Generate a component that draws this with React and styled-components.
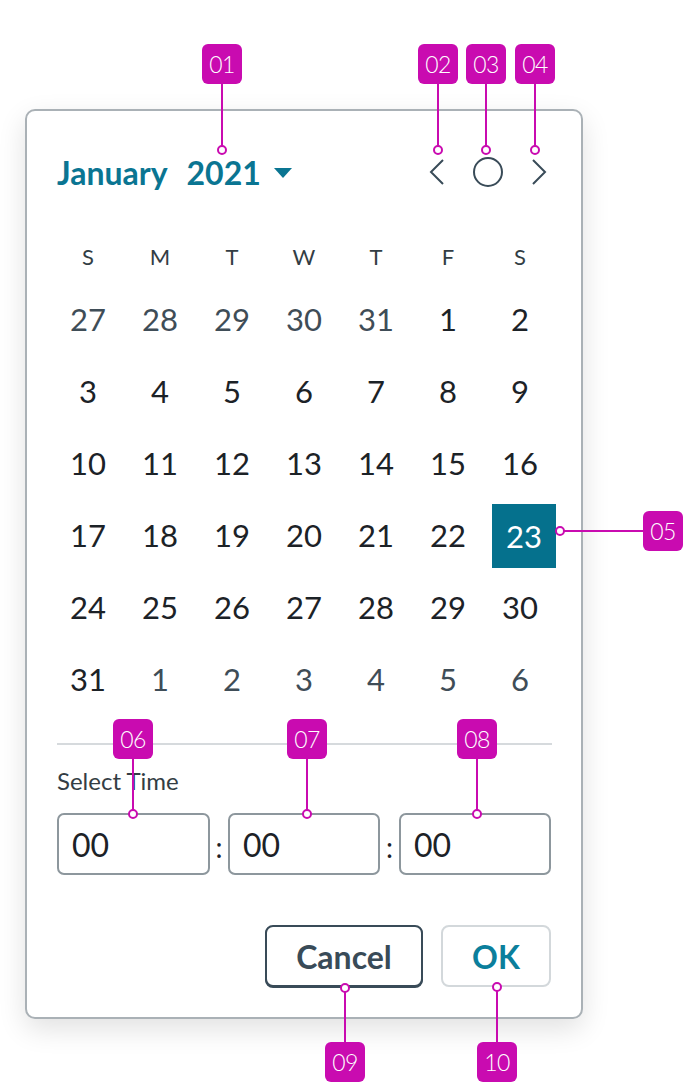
import React from "react"
import styled, { createGlobalStyle } from "styled-components"

const GlobalStyle = createGlobalStyle`
  html, body {
    margin: 0;
    padding: 0;
    background: #ffffff;
  }
  body {
    font-family: "Lato", "Liberation Sans", sans-serif;
  }
`

const MAGENTA = "#c90bb0"
const TEAL = "#0a7592"

const Page = styled.div`
  position: relative;
  width: 684px;
  height: 1082px;
  overflow: hidden;
  padding: 109px 0 0 25px;
  box-sizing: border-box;
`

const Card = styled.div`
  width: 558px;
  height: 910px;
  box-sizing: border-box;
  border: 2px solid #aab1b6;
  border-radius: 10px;
  background: #fff;
  box-shadow: 0 10px 28px rgba(0, 0, 0, 0.12);
  display: flex;
  flex-direction: column;
  padding-bottom: 30px;
`

const Header = styled.header`
  margin-top: 40px;
  height: 42px;
  display: flex;
  align-items: center;
  justify-content: space-between;
  padding: 0 34px 0 30px;
`

const Title = styled.div`
  display: flex;
  align-items: center;
  gap: 19px;
  color: ${TEAL};
  font-size: 32px;
  font-weight: 700;
`

const YearPicker = styled.div`
  display: flex;
  align-items: center;
  gap: 13px;
`

const Caret = styled.span`
  width: 0;
  height: 0;
  border-left: 9px solid transparent;
  border-right: 9px solid transparent;
  border-top: 10px solid ${TEAL};
  margin-top: 2px;
`

const Nav = styled.div`
  display: flex;
  align-items: center;
  gap: 27px;
`

const NavButton = styled.button`
  border: none;
  background: none;
  padding: 0;
  width: ${(p) => p.$w || 16}px;
  height: 30px;
  display: flex;
  align-items: center;
  justify-content: center;
  color: #394b58;
`

const Grid = styled.div`
  display: grid;
  grid-template-columns: repeat(7, 72px);
  margin: 36px 0 0 25px;
`

const WeekDay = styled.div`
  height: 54px;
  display: flex;
  align-items: center;
  justify-content: center;
  font-size: 22px;
  color: #333d44;
`

const Day = styled.div`
  height: 72px;
  display: flex;
  align-items: center;
  justify-content: center;
  font-size: 31px;
  color: ${(p) => (p.$muted ? "#3f4d57" : "#1c2227")};
`

const Selected = styled.div`
  height: 72px;
  display: flex;
  align-items: center;
  justify-content: flex-end;
  span {
    width: 64px;
    height: 64px;
    margin-top: 2px;
    background: #05718d;
    color: #fff;
    font-size: 31px;
    display: flex;
    align-items: center;
    justify-content: center;
  }
`

const Divider = styled.hr`
  margin: 28px 29px 0 30px;
  border: none;
  height: 2px;
  background: #d6dadd;
`

const Label = styled.div`
  margin: 24px 0 0 30px;
  font-size: 24px;
  line-height: 24px;
  color: #333d44;
`

const TimeRow = styled.div`
  margin: 20px 0 0 30px;
  display: flex;
  align-items: center;
`

const TimeBox = styled.div`
  width: ${(p) => p.$w}px;
  height: 62px;
  box-sizing: border-box;
  border: 2px solid #8d979d;
  border-radius: 7px;
  padding-left: 13px;
  display: flex;
  align-items: center;
  font-size: 32px;
  color: #1c2227;
`

const Colon = styled.span`
  width: ${(p) => p.$w}px;
  text-align: center;
  font-size: 28px;
  color: #1c2227;
  margin-top: 6px;
`

const Actions = styled.div`
  margin: 50px 30px 0 0;
  display: flex;
  justify-content: flex-end;
  gap: 18px;
`

const Button = styled.button`
  height: 62px;
  width: ${(p) => p.$w}px;
  box-sizing: border-box;
  border-radius: 8px;
  background: #fff;
  font-family: "Lato", sans-serif;
  font-weight: 700;
  font-size: 32px;
  border: 2px solid ${(p) => (p.$primary ? "#d3d8db" : "#394b58")};
  color: ${(p) => (p.$primary ? "#0b7f9c" : "#394b58")};
  box-shadow: ${(p) => (p.$primary ? "none" : "0 1px 0 #394b58")};
`

const Badge = styled.div`
  position: absolute;
  left: ${(p) => p.$x - 20}px;
  top: ${(p) => p.$y - 20}px;
  width: 40px;
  height: 40px;
  border-radius: 6px;
  background: ${MAGENTA};
  color: #fff;
  font-family: "Lato", sans-serif;
  font-weight: 300;
  font-size: 23px;
  display: flex;
  align-items: center;
  justify-content: center;
  letter-spacing: -0.5px;
`

const Leader = styled.div`
  position: absolute;
  background: ${MAGENTA};
`

const Dot = styled.div`
  position: absolute;
  left: ${(p) => p.$x - 5}px;
  top: ${(p) => p.$y - 5}px;
  width: 10px;
  height: 10px;
  box-sizing: border-box;
  border-radius: 50%;
  border: 2px solid ${MAGENTA};
  background: #fff;
`

function Marker({ label, bx, by, dx, dy }) {
  const vertical = bx === dx
  const lineStyle = vertical
    ? { left: bx - 1, top: Math.min(by, dy), width: 2, height: Math.abs(dy - by) }
    : { left: Math.min(bx, dx), top: by - 1, width: Math.abs(bx - dx), height: 2 }
  return (
    <>
      <Leader style={lineStyle} />
      <Dot $x={dx} $y={dy} />
      <Badge $x={bx} $y={by}>{label}</Badge>
    </>
  )
}

const markers = [
  { label: "01", bx: 222, by: 64, dx: 222, dy: 150 },
  { label: "02", bx: 438, by: 64, dx: 438, dy: 150 },
  { label: "03", bx: 486, by: 64, dx: 486, dy: 150 },
  { label: "04", bx: 535, by: 64, dx: 535, dy: 150 },
  { label: "05", bx: 663, by: 531, dx: 560, dy: 531 },
  { label: "06", bx: 133, by: 739, dx: 133, dy: 814 },
  { label: "07", bx: 307, by: 739, dx: 307, dy: 814 },
  { label: "08", bx: 477, by: 739, dx: 477, dy: 814 },
  { label: "09", bx: 345, by: 1062, dx: 345, dy: 988 },
  { label: "10", bx: 497, by: 1062, dx: 497, dy: 987 },
]

const weekDays = ["S", "M", "T", "W", "T", "F", "S"]

const days = [
  ...[27, 28, 29, 30, 31].map((d) => ({ d, muted: true })),
  ...Array.from({ length: 31 }, (_, i) => ({ d: i + 1 })),
  ...[1, 2, 3, 4, 5, 6].map((d) => ({ d, muted: true })),
]

export default function App() {
  return (
    <>
      <GlobalStyle />
      <Page>
        <Card>
          <Header>
            <Title>
              <span>January</span>
              <YearPicker>
                <span>2021</span>
                <Caret />
              </YearPicker>
            </Title>
            <Nav>
              <NavButton aria-label="Previous month">
                <svg width="16" height="28" viewBox="0 0 16 28">
                  <path d="M14 2 L2 14 L14 26" fill="none" stroke="currentColor" strokeWidth="2" />
                </svg>
              </NavButton>
              <NavButton $w={32} aria-label="Today">
                <svg width="32" height="32" viewBox="0 0 32 32">
                  <circle cx="16" cy="16" r="14" fill="none" stroke="currentColor" strokeWidth="2" />
                </svg>
              </NavButton>
              <NavButton aria-label="Next month">
                <svg width="16" height="28" viewBox="0 0 16 28">
                  <path d="M2 2 L14 14 L2 26" fill="none" stroke="currentColor" strokeWidth="2" />
                </svg>
              </NavButton>
            </Nav>
          </Header>

          <Grid>
            {weekDays.map((w, i) => (
              <WeekDay key={i}>{w}</WeekDay>
            ))}
            {days.map((item, i) =>
              !item.muted && item.d === 23 ? (
                <Selected key={i}>
                  <span>23</span>
                </Selected>
              ) : (
                <Day key={i} $muted={item.muted}>
                  {item.d}
                </Day>
              )
            )}
          </Grid>

          <Divider />
          <Label>Select Time</Label>
          <TimeRow>
            <TimeBox $w={153}>00</TimeBox>
            <Colon $w={18}>:</Colon>
            <TimeBox $w={152}>00</TimeBox>
            <Colon $w={19}>:</Colon>
            <TimeBox $w={152}>00</TimeBox>
          </TimeRow>

          <Actions>
            <Button $w={158}>Cancel</Button>
            <Button $w={110} $primary>
              OK
            </Button>
          </Actions>
        </Card>

        {markers.map((m) => (
          <Marker key={m.label} {...m} />
        ))}
      </Page>
    </>
  )
}
